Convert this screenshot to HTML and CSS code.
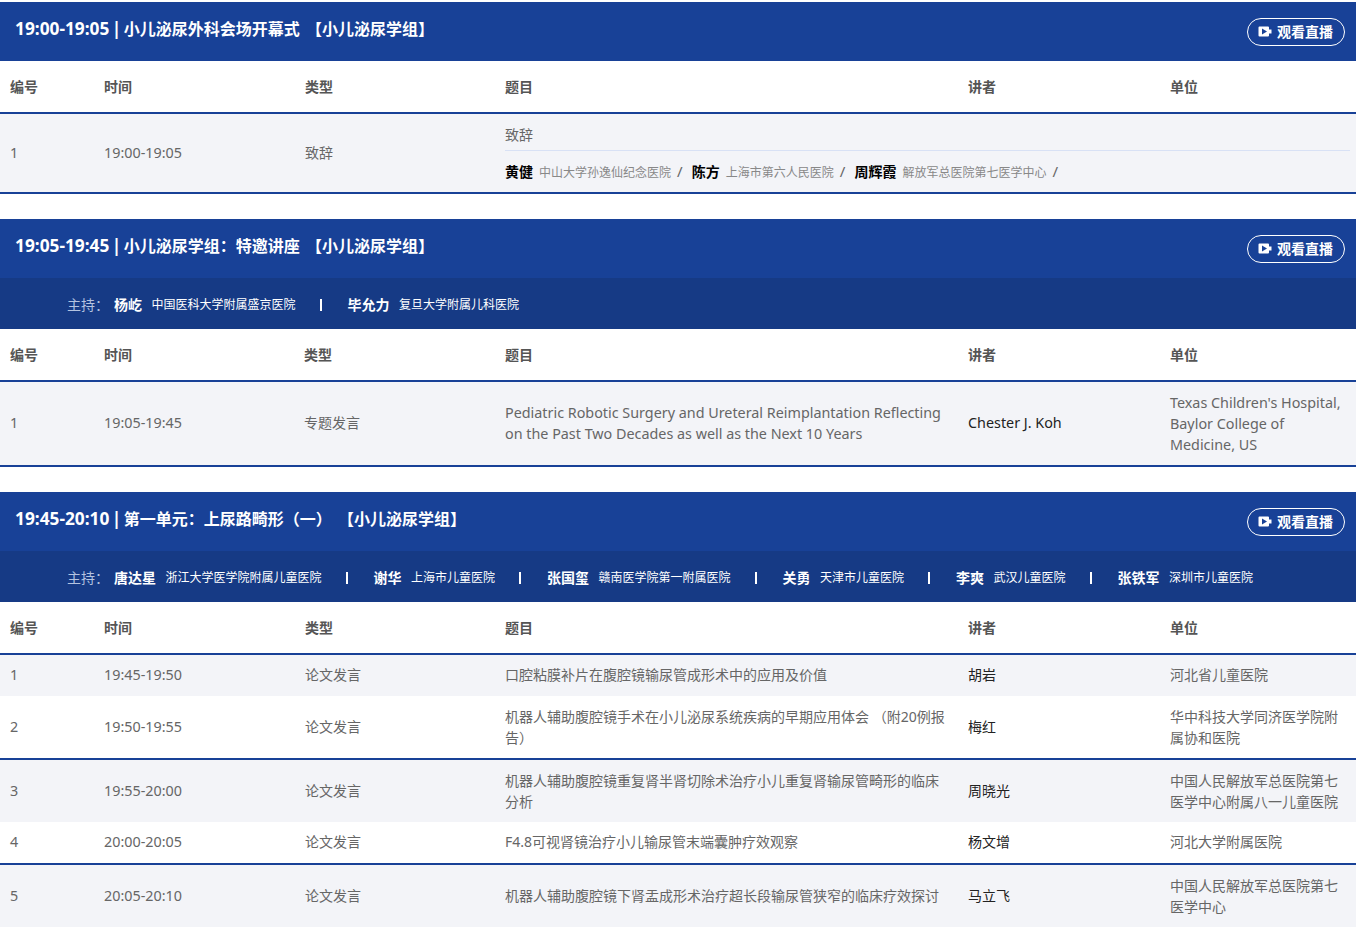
FILE: index.html
```html
<!DOCTYPE html>
<html lang="zh-CN">
<head>
<meta charset="utf-8">
<title>小儿泌尿学组</title>
<link rel="stylesheet" href="styles.css">
</head>
<body>
<section class="session">
  <header class="session-head">
    <h2><span class="slot">19:00-19:05 | </span>小儿泌尿外科会场开幕式 <span class="tag">【小儿泌尿学组】</span></h2>
    <a class="live" href="#"><svg class="live-icon" viewBox="0 0 14 11"><path class="live-body" d="M1.500 0.500h8.500a1 1 0 0 1 1 1v2h2.500v4h-2.500v2a1 1 0 0 1-1 1h-8.500a1 1 0 0 1-1-1v-8a1 1 0 0 1 1-1z"/><path class="live-play" d="M4 2.500v6l5-3z"/></svg>观看直播</a>
  </header>
  <table class="agenda">
    <colgroup><col class="c1"><col class="c2"><col class="c3"><col class="c4"><col class="c5"><col class="c6"></colgroup>
    <thead><tr><th>编号</th><th>时间</th><th>类型</th><th>题目</th><th>讲者</th><th>单位</th></tr></thead>
    <tbody>
      <tr class="shade edge">
        <td>1</td><td>19:00-19:05</td><td>致辞</td>
        <td colspan="3">
          <div class="topic">致辞</div>
          <div class="speakers">
            <b>黄健</b><span class="org">中山大学孙逸仙纪念医院</span><i>/</i>
            <b>陈方</b><span class="org">上海市第六人民医院</span><i>/</i>
            <b>周辉霞</b><span class="org">解放军总医院第七医学中心</span><i>/</i>
          </div>
        </td>
      </tr>
    </tbody>
  </table>
</section>

<section class="session">
  <header class="session-head">
    <h2><span class="slot">19:05-19:45 | </span>小儿泌尿学组：特邀讲座 <span class="tag">【小儿泌尿学组】</span></h2>
    <a class="live" href="#"><svg class="live-icon" viewBox="0 0 14 11"><path class="live-body" d="M1.500 0.500h8.500a1 1 0 0 1 1 1v2h2.500v4h-2.500v2a1 1 0 0 1-1 1h-8.500a1 1 0 0 1-1-1v-8a1 1 0 0 1 1-1z"/><path class="live-play" d="M4 2.500v6l5-3z"/></svg>观看直播</a>
  </header>
  <div class="hosts">
    <span class="hosts-label">主持：</span>
    <b>杨屹</b><span class="host-org">中国医科大学附属盛京医院</span><i class="sep"></i>
    <b>毕允力</b><span class="host-org">复旦大学附属儿科医院</span>
  </div>
  <table class="agenda talk">
    <colgroup><col class="c1"><col class="c2"><col class="c3"><col class="c4"><col class="c5"><col class="c6"></colgroup>
    <thead><tr><th>编号</th><th>时间</th><th>类型</th><th>题目</th><th>讲者</th><th>单位</th></tr></thead>
    <tbody>
      <tr class="shade edge">
        <td>1</td><td>19:05-19:45</td><td>专题发言</td>
        <td class="latin up">Pediatric Robotic Surgery and Ureteral Reimplantation Reflecting on the Past Two Decades as well as the Next 10 Years</td>
        <td class="who latin">Chester J. Koh</td>
        <td class="latin">Texas Children's Hospital, Baylor College of Medicine, US</td>
      </tr>
    </tbody>
  </table>
</section>

<section class="session">
  <header class="session-head">
    <h2><span class="slot">19:45-20:10 | </span>第一单元：上尿路畸形（一） <span class="tag">【小儿泌尿学组】</span></h2>
    <a class="live" href="#"><svg class="live-icon" viewBox="0 0 14 11"><path class="live-body" d="M1.500 0.500h8.500a1 1 0 0 1 1 1v2h2.500v4h-2.500v2a1 1 0 0 1-1 1h-8.500a1 1 0 0 1-1-1v-8a1 1 0 0 1 1-1z"/><path class="live-play" d="M4 2.500v6l5-3z"/></svg>观看直播</a>
  </header>
  <div class="hosts">
    <span class="hosts-label">主持：</span>
    <b>唐达星</b><span class="host-org">浙江大学医学院附属儿童医院</span><i class="sep"></i>
    <b>谢华</b><span class="host-org">上海市儿童医院</span><i class="sep"></i>
    <b>张国玺</b><span class="host-org">赣南医学院第一附属医院</span><i class="sep"></i>
    <b>关勇</b><span class="host-org">天津市儿童医院</span><i class="sep"></i>
    <b>李爽</b><span class="host-org">武汉儿童医院</span><i class="sep"></i>
    <b>张铁军</b><span class="host-org">深圳市儿童医院</span>
  </div>
  <table class="agenda">
    <colgroup><col class="c1"><col class="c2"><col class="c3"><col class="c4"><col class="c5"><col class="c6"></colgroup>
    <thead><tr><th>编号</th><th>时间</th><th>类型</th><th>题目</th><th>讲者</th><th>单位</th></tr></thead>
    <tbody>
      <tr class="shade flat">
        <td>1</td><td>19:45-19:50</td><td>论文发言</td>
        <td>口腔粘膜补片在腹腔镜输尿管成形术中的应用及价值</td>
        <td class="who">胡岩</td><td>河北省儿童医院</td>
      </tr>
      <tr class="edge">
        <td>2</td><td>19:50-19:55</td><td>论文发言</td>
        <td>机器人辅助腹腔镜手术在小儿泌尿系统疾病的早期应用体会 （附20例报告）</td>
        <td class="who">梅红</td><td>华中科技大学同济医学院附属协和医院</td>
      </tr>
      <tr class="shade">
        <td>3</td><td>19:55-20:00</td><td>论文发言</td>
        <td>机器人辅助腹腔镜重复肾半肾切除术治疗小儿重复肾输尿管畸形的临床分析</td>
        <td class="who">周晓光</td><td>中国人民解放军总医院第七医学中心附属八一儿童医院</td>
      </tr>
      <tr class="edge flat">
        <td>4</td><td>20:00-20:05</td><td>论文发言</td>
        <td>F4.8可视肾镜治疗小儿输尿管末端囊肿疗效观察</td>
        <td class="who">杨文增</td><td>河北大学附属医院</td>
      </tr>
      <tr class="shade">
        <td>5</td><td>20:05-20:10</td><td>论文发言</td>
        <td class="up">机器人辅助腹腔镜下肾盂成形术治疗超长段输尿管狭窄的临床疗效探讨</td>
        <td class="who">马立飞</td><td>中国人民解放军总医院第七医学中心</td>
      </tr>
    </tbody>
  </table>
</section>
</body>
</html>
```

FILE: styles.css
```css
html, body {
  margin: 0;
  padding: 0;
  background: #fff;
}
body {
  padding-top: 2px;
  font-family: "Noto Sans", "Noto Sans CJK SC", sans-serif;
  font-size: 14px;
  line-height: 21px;
  color: #666;
}
.session {
  margin-bottom: 25px;
}
.session:last-child {
  margin-bottom: 0;
}
.session-head {
  height: 59px;
  box-sizing: border-box;
  display: flex;
  align-items: center;
  justify-content: space-between;
  padding: 0 11px 0 15px;
  background: #184197;
}
.session-head h2 {
  margin: 0 0 5px;
  font-size: 16px;
  line-height: 24px;
  font-weight: 700;
  color: #fff;
}
.slot {
  font-size: 17.3px;
  word-spacing: -2px;
}
.tag {
  margin-left: 2px;
}
.live {
  display: flex;
  align-items: center;
  gap: 5px;
  box-sizing: border-box;
  width: 98px;
  height: 28px;
  margin-top: 1px;
  padding: 0 0 2px 10px;
  border: 1px solid #fff;
  border-radius: 14px;
  font-size: 14px;
  font-weight: 700;
  color: #fff;
  text-decoration: none;
}
.live-icon {
  width: 14px;
  height: 11px;
}
.live-body {
  fill: #fff;
}
.live-play {
  fill: #184197;
}
.hosts {
  height: 51px;
  box-sizing: border-box;
  display: flex;
  align-items: center;
  padding: 2px 0 0 67px;
  background: #163a85;
  color: #fff;
  font-size: 12px;
}
.hosts-label {
  width: 47px;
  font-size: 14px;
  color: #b4c3e0;
}
.hosts b {
  font-size: 14px;
  font-weight: 700;
}
.host-org {
  margin-left: 9.5px;
}
.sep {
  width: 2px;
  height: 12px;
  margin: 0 26px 0 24px;
  background: #fff;
}
.agenda {
  width: 100%;
  table-layout: fixed;
  border-collapse: separate;
  border-spacing: 0;
}
.c1 { width: 94px; }
.c2 { width: 201px; }
.c3 { width: 200px; }
.c4 { width: 463px; }
.c5 { width: 202px; }
.talk .c2 { width: 200px; }
.talk .c3 { width: 201px; }
.agenda th {
  height: 51px;
  padding: 0 10px;
  box-sizing: content-box;
  border-bottom: 2px solid #184197;
  text-align: left;
  font-weight: 700;
  color: #555;
}
.agenda td {
  padding: 10px;
  vertical-align: middle;
}
.agenda td:nth-child(-n+3),
.agenda td.who,
.agenda td.up,
.agenda .flat td {
  padding-top: 9px;
  padding-bottom: 11px;
}
.agenda td:nth-child(1),
.agenda td:nth-child(2),
.agenda td.latin {
  font-size: 14.35px;
}
.shade td {
  background: #f3f4f8;
}
.edge td {
  border-bottom: 2px solid #184197;
}
.agenda td.who {
  color: #222;
}
.topic {
  margin-right: -4px;
  padding-bottom: 5px;
  border-bottom: 1px solid #d8e1f5;
}
.speakers {
  height: 21px;
  margin-top: 10px;
  white-space: nowrap;
}
.speakers b {
  color: #000;
  font-weight: 700;
}
.org {
  margin: 0 6px;
  font-size: 12px;
  line-height: 1;
  color: #888;
}
.speakers i {
  font-style: normal;
  font-size: 15px;
  line-height: 1;
  margin-right: 5.500px;
}
```
